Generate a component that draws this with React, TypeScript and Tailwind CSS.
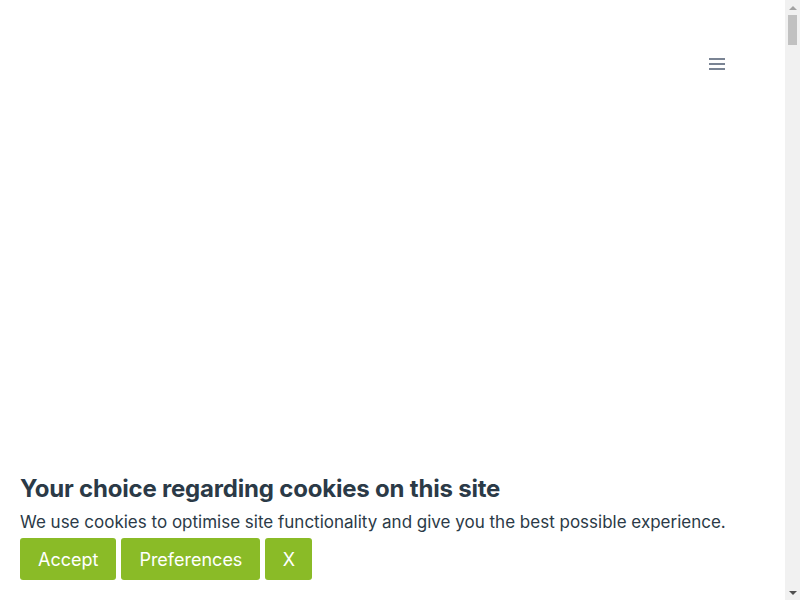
function Scrollbar() {
  return (
    <div className="flex h-full w-[15px] shrink-0 flex-col items-center bg-[#f1f1f1]">
      <div className="flex h-[15px] w-full items-center justify-center">
        <span className="block h-0 w-0 border-x-[4px] border-b-[4px] border-x-transparent border-b-[#a3a3a3]" />
      </div>
      <div className="h-[30px] w-[9px] bg-[#c1c1c1]" />
      <div className="flex-1" />
      <div className="flex h-[15px] w-full items-center justify-center">
        <span className="block h-0 w-0 border-x-[4px] border-t-[4px] border-x-transparent border-t-[#505050]" />
      </div>
    </div>
  );
}

export default function App() {
  return (
    <div className="flex h-screen overflow-hidden bg-white font-['Inter',sans-serif] text-[#2b3a47]">
      <div className="flex min-w-0 flex-1 flex-col">
        <header className="flex h-[128px] items-start justify-end px-[60px] pt-[58px]">
          <button type="button" aria-label="Menu" className="flex w-4 flex-col gap-[3px]">
            <span className="block h-[2px] w-4 bg-[#7a8494]" />
            <span className="block h-[2px] w-4 bg-[#7a8494]" />
            <span className="block h-[2px] w-4 bg-[#7a8494]" />
          </button>
        </header>

        <main className="flex-1" />

        <div className="bg-white px-5 pb-5 pt-4">
          <h2 className="text-[24px] font-bold leading-[30px] tracking-[-0.2px]">
            Your choice regarding cookies on this site
          </h2>
          <p className="mt-[7px] text-[17px] leading-[22px]">
            We use cookies to optimise site functionality and give you the best possible experience.
          </p>
          <div className="mt-[5px] flex gap-[5px]">
            <button type="button" className="h-[42px] rounded-[3px] bg-[#8abb27] px-[18px] text-[18px] text-white">
              Accept
            </button>
            <button type="button" className="h-[42px] rounded-[3px] bg-[#8abb27] px-[18px] text-[18px] text-white">
              Preferences
            </button>
            <button type="button" className="h-[42px] w-[47px] rounded-[3px] bg-[#8abb27] text-[18px] text-white">
              X
            </button>
          </div>
        </div>
      </div>
      <Scrollbar />
    </div>
  );
}
